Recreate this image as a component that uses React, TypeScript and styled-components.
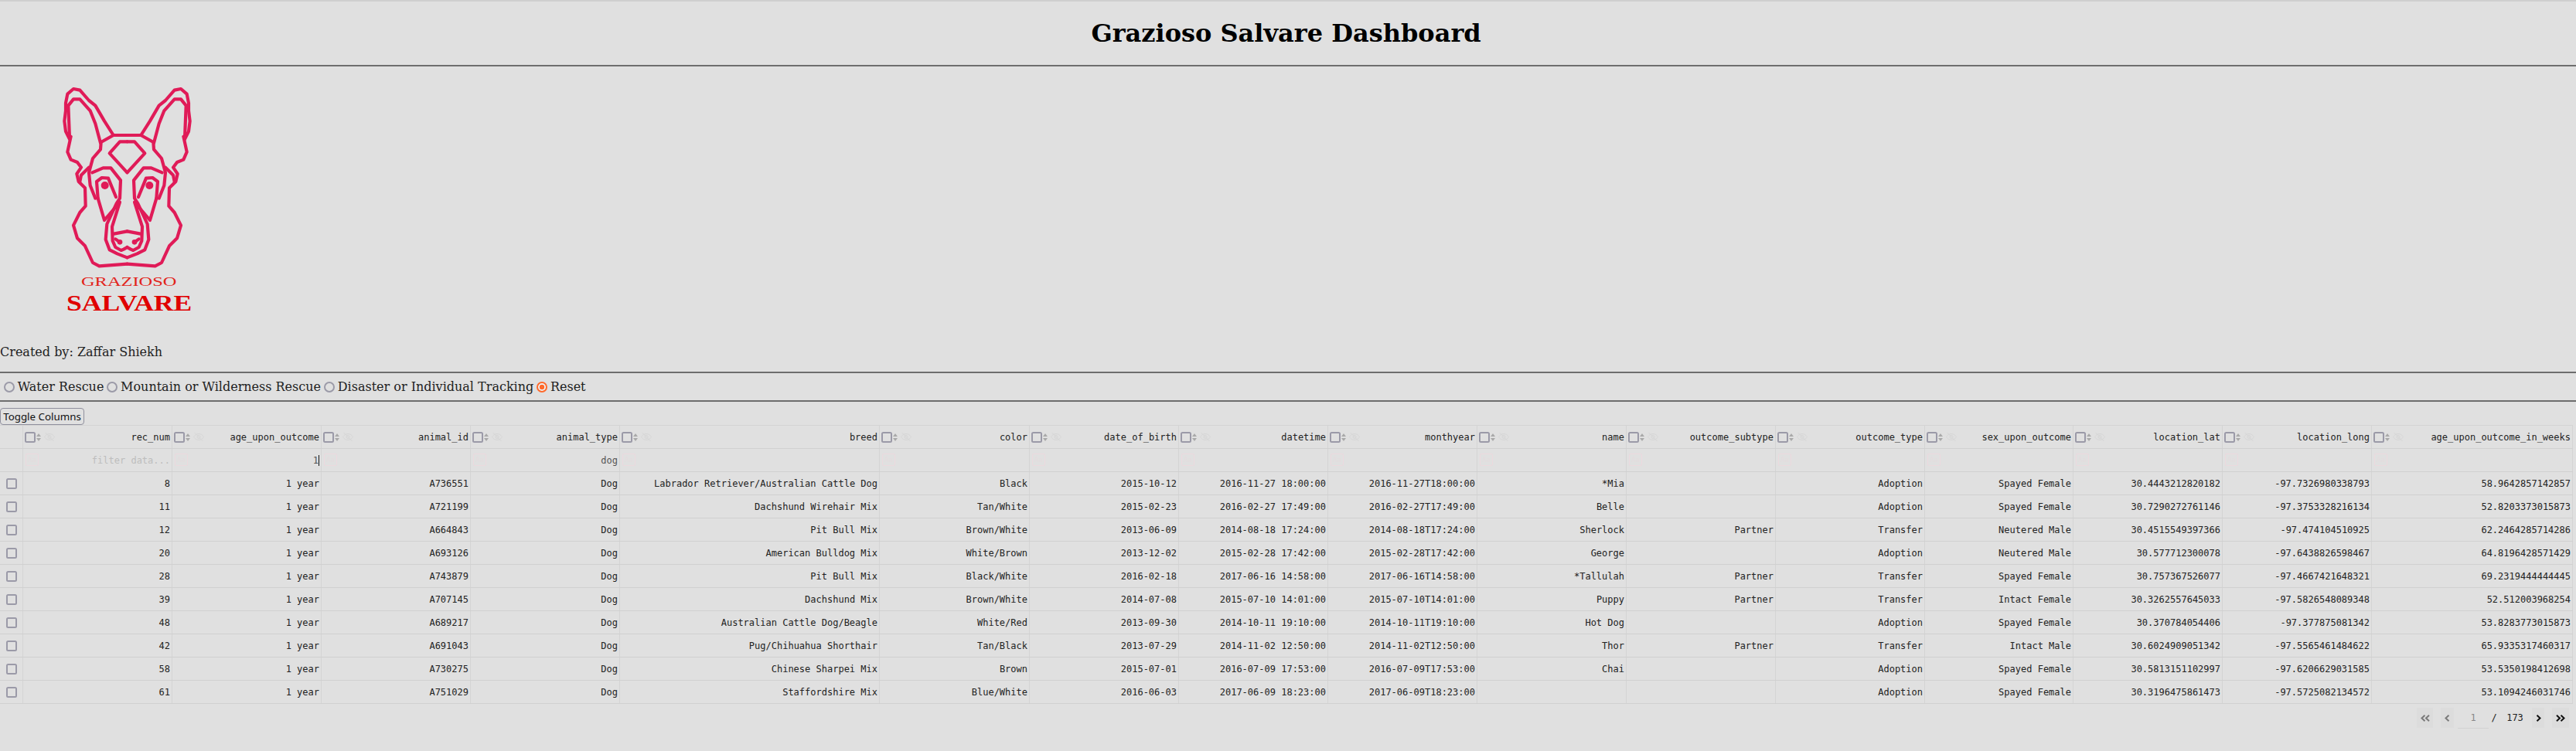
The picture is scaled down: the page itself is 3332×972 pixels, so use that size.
import React from "react";
import styled, { createGlobalStyle } from "styled-components";

const Global = createGlobalStyle`
  html, body { margin: 0; padding: 0; background: #e0e0e0; }
  body { font-family: "DejaVu Serif", serif; font-size: 16px; color: #222; }
`;
const Page = styled.div`
  border-top: 2px solid #cfcfcf;
  width: 3332px;
  height: 970px;
  overflow: hidden;
`;
const Title = styled.h1`
  margin: 0;
  height: 82px;
  padding-right: 5px;
  display: flex;
  align-items: center;
  justify-content: center;
  font-size: 32px;
  font-weight: bold;
  color: #000;
`;
const Rule = styled.hr`
  margin: 0;
  border: 0;
  border-top: 2px solid #6e6e6e;
`;
const LogoArea = styled.div`
  height: 360px;
  padding: 14px 0 0 60px;
  box-sizing: border-box;
`;
const Credit = styled.div`
  height: 23px;
  line-height: 20px;
  margin-bottom: 12px;
`;
const Radios = styled.div`
  height: 35px;
  display: flex;
  align-items: center;
  padding-left: 5px;
  gap: 4px;
`;
const RadioItem = styled.label`
  display: flex;
  align-items: center;
  gap: 3.7px;
`;
const RadioDot = styled.span<{ $on?: boolean }>`
  width: 14px;
  height: 14px;
  box-sizing: border-box;
  border-radius: 50%;
  border: 2px solid ${(p) => (p.$on ? "#ff6a2b" : "#9b9aa8")};
  background: ${(p) => (p.$on ? "radial-gradient(circle, #ff6a2b 0 3px, #eeeeee 3.5px)" : "transparent")};
`;
const Toolbar = styled.div`
  padding-top: 8px;
  height: 22px;
`;
const ToggleButton = styled.button`
  display: block;
  font-family: "Noto Sans", sans-serif;
  font-size: 13.333px;
  width: 109px;
  height: 22px;
  padding: 0;
  background: #e0e0e0;
  border: 1px solid #8f8f9d;
  border-radius: 4px;
  color: #111;
`;
const Row = styled.div<{ $head?: boolean }>`
  display: grid;
  grid-template-columns: 30px repeat(4, 193px) 336px 194px repeat(6, 193px) 192px 193px 193px 260px;
  width: 3328px;
  height: ${(p) => (p.$head ? 31 : 30)}px;
  border-top: ${(p) => (p.$head ? "1px solid #d4d4d4" : "0")};
  border-bottom: 1px solid #d0d0d0;
  box-sizing: border-box;
  font-family: "DejaVu Sans Mono", monospace;
  font-size: 12px;
  color: #222;
`;
const Cell = styled.div`
  border-right: 1px solid #d4d4d4;
  display: flex;
  align-items: center;
  justify-content: flex-end;
  padding-right: 2px;
  white-space: nowrap;
  position: relative;
`;
const HeaderCell = styled(Cell)`
  padding-left: 2px;
  justify-content: space-between;
`;
const Tools = styled.span`
  display: flex;
  align-items: center;
`;
const Box = styled.span`
  display: inline-block;
  width: 14px;
  height: 14px;
  box-sizing: border-box;
  border: 2px solid #9b9aa8;
  border-radius: 2.500px;
`;
const SelectCell = styled(Cell)`
  justify-content: center;
  padding-right: 0;
`;
const FilterCell = styled(Cell)<{ $ph?: boolean }>`
  color: ${(p) => (p.$ph ? "#bdbdbd" : "#555")};
`;
const CaseBox = styled.span`
  position: absolute;
  left: 3px;
  top: 6px;
  width: 17px;
  height: 16px;
  display: flex;
  align-items: center;
  justify-content: center;
  border: 1px solid #ecd9de;
  border-radius: 2px;
  box-sizing: border-box;
  font-size: 9px;
  color: #e4dcde;
`;
const Caret = styled.span`
  width: 1px;
  height: 14px;
  background: #111;
`;
const Pager = styled.div`
  display: flex;
  justify-content: flex-end;
  align-items: center;
  width: 3323px;
  height: 26px;
  margin-top: 5px;
  font-family: "DejaVu Sans Mono", monospace;
  font-size: 12px;
  color: #222;
`;
const PageButton = styled.span<{ $off?: boolean; $w: number; $ml?: number }>`
  width: ${(p) => p.$w}px;
  height: 26px;
  margin-left: ${(p) => p.$ml ?? 0}px;
  display: flex;
  align-items: center;
  justify-content: center;
  background: #dcdcdc;
  color: ${(p) => (p.$off ? "#7a7a7a" : "#111")};
`;
const PageInput = styled.span`
  width: 40px;
  height: 27px;
  margin-left: 5px;
  border-bottom: 1px solid #d2d2d2;
  box-sizing: border-box;
  display: flex;
  align-items: center;
  justify-content: center;
  color: #888;
`;
const PageText = styled.span<{ $w: number }>`
  width: ${(p) => p.$w}px;
  text-align: center;
`;
const SortIcon = styled.svg`
  margin-left: 1px;
`;
const HideIcon = styled.svg`
  margin-left: 4px;
`;

const Sort = () => (
  <SortIcon width="6" height="10" viewBox="0 0 6 10">
    <path d="M3 0 6 4H0Z M3 10 6 6H0Z" fill="#a9a9a9" />
  </SortIcon>
);
const Hide = () => (
  <HideIcon width="14" height="13" viewBox="0 0 14 13" fill="none" stroke="#d6d6d6" strokeWidth="1">
    <path d="M.5 6.500C2.500 3.500 4.500 2.500 7 2.500S11.500 3.500 13.500 6.500C11.500 9.500 9.500 10.500 7 10.500S2.500 9.500.5 6.500Z" />
    <circle cx="7" cy="6.500" r="2" />
    <path d="M1.500 1 12.500 12" />
  </HideIcon>
);
const Chevron = ({ dbl, left }: { dbl?: boolean; left?: boolean }) => (
  <svg width={dbl ? 12 : 7} height="9" viewBox={dbl ? "0 0 12 9" : "0 0 7 9"} fill="none" stroke="currentColor" strokeWidth="2">
    {left ? (
      dbl ? <path d="M5.500 .8 1.500 4.500 5.500 8.200M11 .8 7 4.500 11 8.200" /> : <path d="M5.500 .8 1.500 4.500 5.500 8.200" />
    ) : dbl ? (
      <path d="M1 .8 5 4.500 1 8.200M6.500 .8 10.500 4.500 6.500 8.200" />
    ) : (
      <path d="M1.500 .8 5.500 4.500 1.500 8.200" />
    )}
  </svg>
);

const half = (
  <>
    <path d="M313.500 225 260 225 225 170 190 110 165 90 130 50 105 45 82 65 75 100 75 130 70 170 75 210 90 240" />
    <path d="M90 235 85 110 105 85 130 85 170 130 190 180 210 255" />
    <path d="M95 230 82 290 95 320 120 330 135 350 118 375 125 405 150 430 152 500 130 525 105 575 120 625 150 655 180 720 205 733 313.500 725" />
    <path d="M260 225 212 252 210 280 180 315 165 370 170 420 190 470" />
    <path d="M165 350 135 380 130 405" />
    <path d="M178 370 220 352 250 352 288 400 285 470 272 490 235 570 230 630 245 670 275 685 300 695 313.500 700" />
    <path d="M200 470 195 405 215 390 240 392 270 465" />
    <path d="M200 470 225 555 285 485 255 580 257 635 268 660 290 672 300 668 313.500 660" />
    <path d="M313.500 250 285 250 245 295 313.500 370" />
    <path d="M262 608 313.500 598" />
    <path d="M268 628 285 640" />
    <circle cx="227" cy="420" r="15" fill="#e01b58" stroke="none" />
    <circle cx="285" cy="640" r="10" fill="#e01b58" stroke="none" />
  </>
);
const Logo = () => (
  <svg width="200" height="310" viewBox="0 0 600 930" fill="none">
    <g stroke="#e01b58" strokeWidth="12.500" strokeLinejoin="round" strokeLinecap="round">
      {half}
      <g transform="translate(627 0) scale(-1 1)">{half}</g>
    </g>
    <text x="135" y="810" fontFamily="Liberation Serif, serif" fontSize="53" fill="#e2231a" textLength="370" lengthAdjust="spacingAndGlyphs">GRAZIOSO</text>
    <text x="78" y="905" fontFamily="Liberation Serif, serif" fontWeight="bold" fontSize="86" fill="#e00000" textLength="487" lengthAdjust="spacingAndGlyphs">SALVARE</text>
  </svg>
);

const columns = ["rec_num", "age_upon_outcome", "animal_id", "animal_type", "breed", "color", "date_of_birth", "datetime", "monthyear", "name", "outcome_subtype", "outcome_type", "sex_upon_outcome", "location_lat", "location_long", "age_upon_outcome_in_weeks"];
const data: string[][] = [
  ["8", "1 year", "A736551", "Dog", "Labrador Retriever/Australian Cattle Dog", "Black", "2015-10-12", "2016-11-27 18:00:00", "2016-11-27T18:00:00", "*Mia", "", "Adoption", "Spayed Female", "30.4443212820182", "-97.7326980338793", "58.9642857142857"],
  ["11", "1 year", "A721199", "Dog", "Dachshund Wirehair Mix", "Tan/White", "2015-02-23", "2016-02-27 17:49:00", "2016-02-27T17:49:00", "Belle", "", "Adoption", "Spayed Female", "30.7290272761146", "-97.3753328216134", "52.8203373015873"],
  ["12", "1 year", "A664843", "Dog", "Pit Bull Mix", "Brown/White", "2013-06-09", "2014-08-18 17:24:00", "2014-08-18T17:24:00", "Sherlock", "Partner", "Transfer", "Neutered Male", "30.4515549397366", "-97.474104510925", "62.2464285714286"],
  ["20", "1 year", "A693126", "Dog", "American Bulldog Mix", "White/Brown", "2013-12-02", "2015-02-28 17:42:00", "2015-02-28T17:42:00", "George", "", "Adoption", "Neutered Male", "30.577712300078", "-97.6438826598467", "64.8196428571429"],
  ["28", "1 year", "A743879", "Dog", "Pit Bull Mix", "Black/White", "2016-02-18", "2017-06-16 14:58:00", "2017-06-16T14:58:00", "*Tallulah", "Partner", "Transfer", "Spayed Female", "30.757367526077", "-97.4667421648321", "69.2319444444445"],
  ["39", "1 year", "A707145", "Dog", "Dachshund Mix", "Brown/White", "2014-07-08", "2015-07-10 14:01:00", "2015-07-10T14:01:00", "Puppy", "Partner", "Transfer", "Intact Female", "30.3262557645033", "-97.5826548089348", "52.512003968254"],
  ["48", "1 year", "A689217", "Dog", "Australian Cattle Dog/Beagle", "White/Red", "2013-09-30", "2014-10-11 19:10:00", "2014-10-11T19:10:00", "Hot Dog", "", "Adoption", "Spayed Female", "30.370784054406", "-97.377875081342", "53.8283773015873"],
  ["42", "1 year", "A691043", "Dog", "Pug/Chihuahua Shorthair", "Tan/Black", "2013-07-29", "2014-11-02 12:50:00", "2014-11-02T12:50:00", "Thor", "Partner", "Transfer", "Intact Male", "30.6024909051342", "-97.5565461484622", "65.9335317460317"],
  ["58", "1 year", "A730275", "Dog", "Chinese Sharpei Mix", "Brown", "2015-07-01", "2016-07-09 17:53:00", "2016-07-09T17:53:00", "Chai", "", "Adoption", "Spayed Female", "30.5813151102997", "-97.6206629031585", "53.5350198412698"],
  ["61", "1 year", "A751029", "Dog", "Staffordshire Mix", "Blue/White", "2016-06-03", "2017-06-09 18:23:00", "2017-06-09T18:23:00", "", "", "Adoption", "Spayed Female", "30.3196475861473", "-97.5725082134572", "53.1094246031746"],
];

export default function App() {
  return (
    <Page>
      <Global />
      <Title>Grazioso Salvare Dashboard</Title>
      <Rule />
      <LogoArea><Logo /></LogoArea>
      <Credit>Created by: Zaffar Shiekh</Credit>
      <Rule />
      <Radios>
        <RadioItem><RadioDot />Water Rescue</RadioItem>
        <RadioItem><RadioDot />Mountain or Wilderness Rescue</RadioItem>
        <RadioItem><RadioDot />Disaster or Individual Tracking</RadioItem>
        <RadioItem><RadioDot $on />Reset</RadioItem>
      </Radios>
      <Rule />
      <Toolbar><ToggleButton>Toggle Columns</ToggleButton></Toolbar>
      <Row $head>
        <Cell />
        {columns.map((c) => (
          <HeaderCell key={c}><Tools><Box /><Sort /><Hide /></Tools>{c}</HeaderCell>
        ))}
      </Row>
      <Row>
        <Cell />
        {columns.map((c, i) => (
          <FilterCell key={c} $ph={i === 0}>
            <CaseBox>Aa</CaseBox>
            {i === 0 ? "filter data..." : i === 1 ? <>1<Caret /></> : i === 3 ? "dog" : ""}
          </FilterCell>
        ))}
      </Row>
      {data.map((r) => (
        <Row key={r[0]}>
          <SelectCell><Box /></SelectCell>
          {r.map((v, i) => <Cell key={i}>{v}</Cell>)}
        </Row>
      ))}
      <Pager>
        <PageButton $off $w={21}><Chevron dbl left /></PageButton>
        <PageButton $off $w={17} $ml={10}><Chevron left /></PageButton>
        <PageInput>1</PageInput>
        <PageText $w={14}>/</PageText>
        <PageText $w={40}>173</PageText>
        <PageButton $w={16} $ml={2}><Chevron /></PageButton>
        <PageButton $w={22} $ml={10}><Chevron dbl /></PageButton>
      </Pager>
    </Page>
  );
}
